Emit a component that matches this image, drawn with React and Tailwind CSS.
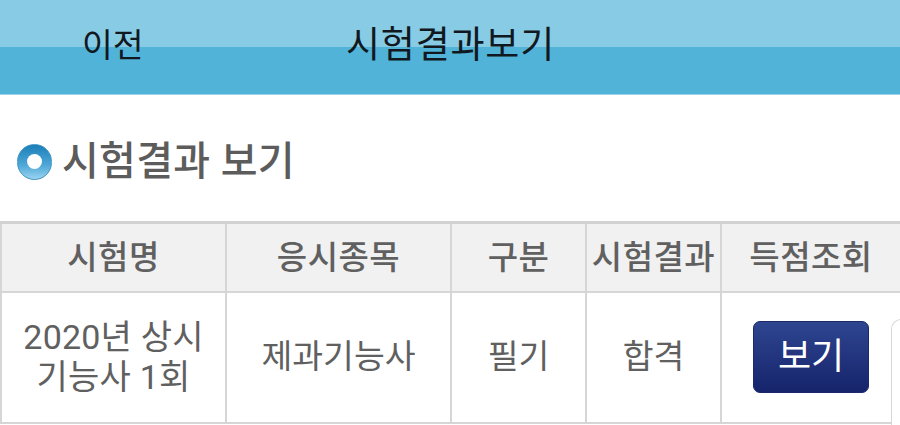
const font = { fontFamily: '"Roboto", "Noto Sans CJK KR", sans-serif' };

const headers = [
  { label: "시험명", width: "w-[225px]" },
  { label: "응시종목", width: "w-[225px]" },
  { label: "구분", width: "w-[135px]" },
  { label: "시험결과", width: "w-[135px]" },
  { label: "득점조회", width: "w-[180px]" },
];

export default function App() {
  return (
    <div
      className="relative w-[900px] h-[425px] overflow-hidden bg-white"
      style={font}
    >
      {/* top bar */}
      <div className="relative h-[95px] bg-[linear-gradient(#87cbe5_0,#87cbe5_47px,#52b3d9_47px,#52b3d9_100%)] border-b border-[#9fd2e6]">
        <div className="flex h-full items-center pb-[3px] text-[#101820]">
          <span className="ml-[82px] w-[264px] text-[33.5px] leading-none">이전</span>
          <span className="text-[37px] tracking-[0.8px] leading-none">시험결과보기</span>
        </div>
      </div>

      {/* section title */}
      <div className="flex items-center h-[126px] pl-[17px] pt-[7px]">
        <span className="flex items-center justify-center w-[35px] h-[36px] rounded-full border border-[#3f93c4] bg-[linear-gradient(#1b7fb8,#4fa8d8_60%,#9ad4f0)]">
          <span className="w-[15px] h-[15px] rounded-full bg-white" />
        </span>
        <h1 className="ml-[10px] text-[40px] tracking-[0.3px] leading-none font-medium text-[#5c5c5c]">
          시험결과 보기
        </h1>
      </div>

      {/* result table */}
      <table className="w-[900px] table-fixed border-collapse border-t-[3px] border-[#d2d2d2] text-[33.5px] text-[#606060]">
        <thead>
          <tr className="h-[69px] bg-[#f1f1f1]">
            {headers.map((h) => (
              <th
                key={h.label}
                className={`${h.width} border-x-2 border-b-2 border-[#d6d6d6] p-0 font-medium text-[33px] tracking-[0.5px] whitespace-nowrap`}
              >
                {h.label}
              </th>
            ))}
          </tr>
        </thead>
        <tbody>
          <tr className="h-[131px]">
            <td className="border-x-2 border-b-2 border-[#d6d6d6] p-0 text-center text-[34px] tracking-[0.2px] leading-[40px]">
              2020년 상시
              <br />
              기능사 1회
            </td>
            <td className="border-x-2 border-b-2 border-[#d6d6d6] p-0 text-center">제과기능사</td>
            <td className="border-x-2 border-b-2 border-[#d6d6d6] p-0 text-center">필기</td>
            <td className="border-x-2 border-b-2 border-[#d6d6d6] p-0 text-center">합격</td>
            <td className="border-l-2 border-b-2 border-[#d6d6d6] p-0">
              <button
                type="button"
                className="ml-[31px] block w-[116px] h-[72px] rounded-[7px] border border-[#1c2a6b] bg-[linear-gradient(#2f4590,#15246b)] text-[36px] text-white"
              >
                보기
              </button>
            </td>
          </tr>
        </tbody>
      </table>

      {/* edge of next cell peeking in */}
      <div className="absolute left-[891px] top-[319px] w-[20px] h-[110px] rounded-tl-[10px] border-l border-t border-[#d6d6d6] bg-white" />
    </div>
  );
}
